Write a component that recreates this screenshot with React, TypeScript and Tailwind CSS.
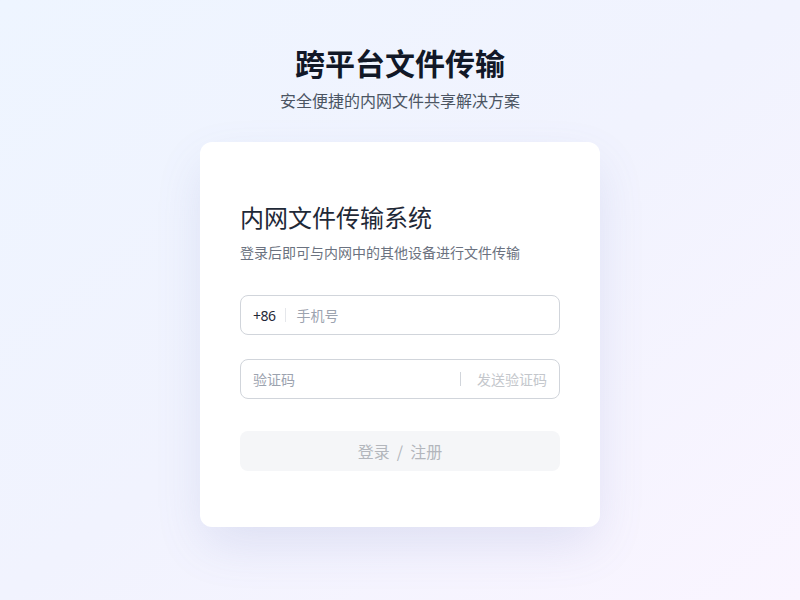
import React from "react";

export default function App() {
  const font = { fontFamily: '"Noto Sans CJK SC", "Noto Sans", sans-serif' };
  return (
    <div
      className="min-h-[600px] w-full bg-gradient-to-br from-[#eef5ff] via-[#f1f3fe] to-[#faf5ff] flex flex-col items-center"
      style={font}
    >
      <h1 className="mt-[42px] text-[30px] leading-[40px] font-bold text-[#111827]">
        跨平台文件传输
      </h1>
      <p className="mt-[6px] text-[16px] leading-[24px] text-[#4b5563]">
        安全便捷的内网文件共享解决方案
      </p>
      <div className="mt-[30px] w-[400px] h-[385px] bg-white rounded-xl shadow-[0_20px_50px_-5px_rgba(100,110,180,0.16)] px-10 pt-[58px]">
        <h2 className="text-[24px] leading-[34px] text-[#1f2937]">内网文件传输系统</h2>
        <p className="mt-[8px] text-[14px] leading-[20px] text-[#6b7280]">
          登录后即可与内网中的其他设备进行文件传输
        </p>
        <div className="mt-[33px] h-10 rounded-lg border border-[#d1d5db] flex items-center px-3">
          <span className="text-[14px] text-[#1f2937] tracking-[-0.5px]" style={{ fontFamily: '"Noto Sans", sans-serif' }}>+86</span>
          <span className="ml-[9px] w-px h-[14px] bg-[#e5e7eb]" />
          <span className="ml-[11px] text-[14px] text-[#9ca3af]">手机号</span>
        </div>
        <div className="mt-6 h-10 rounded-lg border border-[#d1d5db] flex items-center px-3">
          <span className="text-[14px] text-[#9ca3af]">验证码</span>
          <span className="ml-auto w-px h-[14px] bg-[#d1d5db]" />
          <span className="ml-4 text-[14px] text-[#c4c7cc]">发送验证码</span>
        </div>
        <div className="mt-8 h-10 rounded-lg bg-[#f5f6f8] flex items-center justify-center text-[16px] text-[#b3b6bc]">
          登录&nbsp;&nbsp;/&nbsp;&nbsp;注册
        </div>
      </div>
    </div>
  );
}
